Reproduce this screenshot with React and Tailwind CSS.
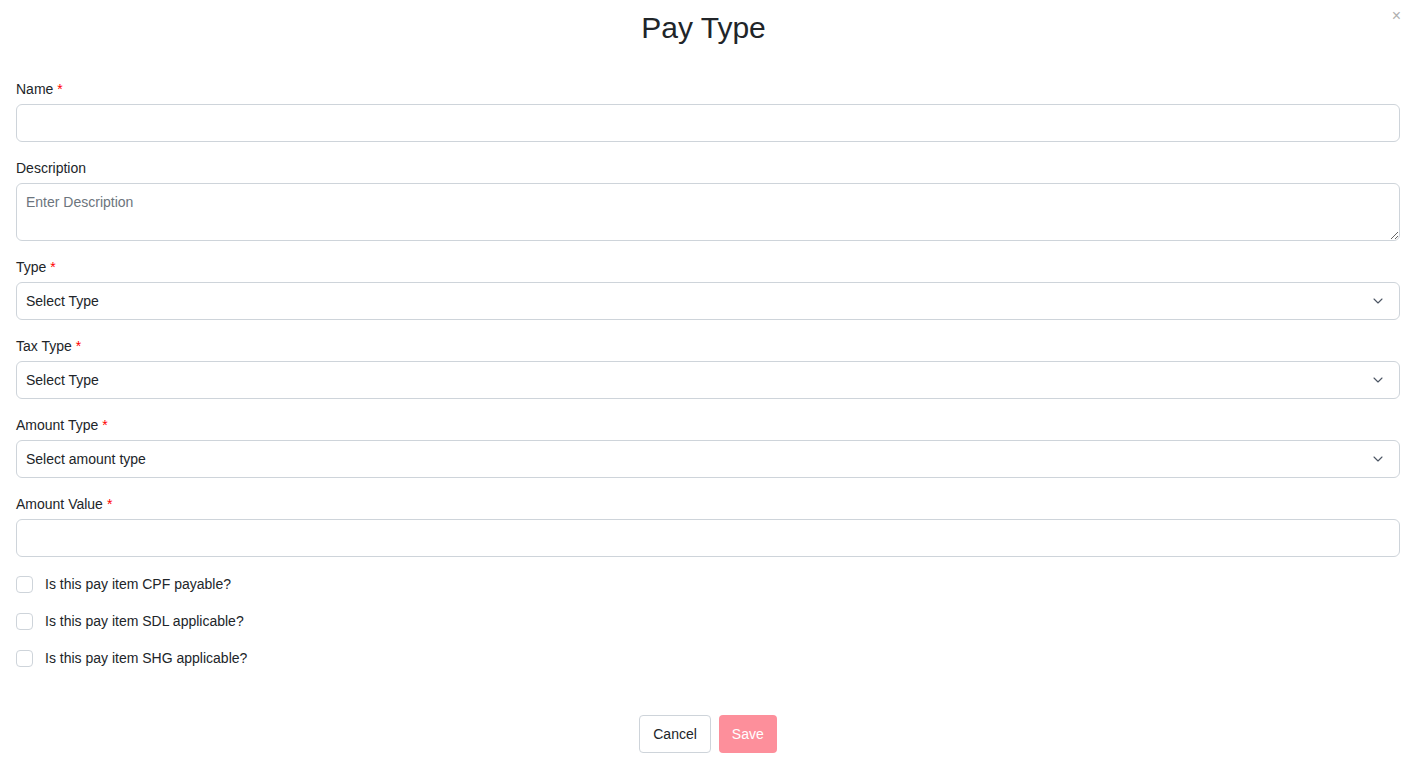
import { ChevronDown } from 'lucide-react';

const font = { fontFamily: '"Liberation Sans", Arial, sans-serif' };

function Label({ children, required }) {
  return (
    <label className="block text-[14px] leading-[21px] text-[#212529] mb-[4px]">
      {children}
      {required && <span className="text-[#ff0000] ml-[4px]">*</span>}
    </label>
  );
}

function SelectBox({ placeholder }) {
  return (
    <div className="relative h-[38px] w-full rounded-[6px] border border-[#ced4da] bg-white flex items-center pl-[9px] pr-[13px]">
      <span className="flex-1 text-[14px] text-[#212529]">{placeholder}</span>
      <ChevronDown size={16} strokeWidth={1.6} className="text-[#4b5563]" />
    </div>
  );
}

function Check({ children }) {
  return (
    <label className="flex items-center gap-[12px] h-[20px] text-[14px] text-[#212529]">
      <span className="w-[17px] h-[17px] rounded-[4px] border border-[#ced4da] bg-white" />
      {children}
    </label>
  );
}

export default function App() {
  return (
    <div className="min-h-screen w-full bg-white relative" style={font}>
      <button className="absolute right-[22px] top-[8px] text-[#b0b0b0] text-[16px] leading-none">×</button>
      <h2 className="w-[1407px] text-center text-[30px] leading-[36px] text-[#212529] pt-[10px]">Pay Type</h2>

      <div className="pl-[16px] pr-[23px] pt-[33px]">
        <div className="mb-[16px]">
          <Label required>Name</Label>
          <input className="block h-[38px] w-full rounded-[6px] border border-[#ced4da] px-[9px] text-[14px] outline-none" />
        </div>

        <div className="mb-[16px]">
          <Label>Description</Label>
          <textarea
            placeholder="Enter Description"
            className="block h-[58px] w-full rounded-[6px] border border-[#ced4da] px-[9px] pt-[8px] pb-[9px] text-[14px] leading-[20px] placeholder:text-[#6c757d] outline-none"
          />
        </div>

        <div className="mb-[16px]">
          <Label required>Type</Label>
          <SelectBox placeholder="Select Type" />
        </div>

        <div className="mb-[16px]">
          <Label required>Tax Type</Label>
          <SelectBox placeholder="Select Type" />
        </div>

        <div className="mb-[16px]">
          <Label required>Amount Type</Label>
          <SelectBox placeholder="Select amount type" />
        </div>

        <div className="mb-[16px]">
          <Label required>Amount Value</Label>
          <input className="block h-[38px] w-full rounded-[6px] border border-[#ced4da] px-[9px] text-[14px] outline-none" />
        </div>

        <div className="flex flex-col gap-[17px] pt-[1px]">
          <Check>Is this pay item CPF payable?</Check>
          <Check>Is this pay item SDL applicable?</Check>
          <Check>Is this pay item SHG applicable?</Check>
        </div>

        <div className="flex justify-center gap-[8px] pt-[47px]">
          <button className="h-[38px] px-[13px] rounded-[4px] border border-[#ced4da] bg-white text-[14px] text-[#212529]">
            Cancel
          </button>
          <button className="h-[38px] px-[13px] rounded-[4px] bg-[#fd8f9b] text-[14px] text-white">
            Save
          </button>
        </div>
      </div>
    </div>
  );
}
